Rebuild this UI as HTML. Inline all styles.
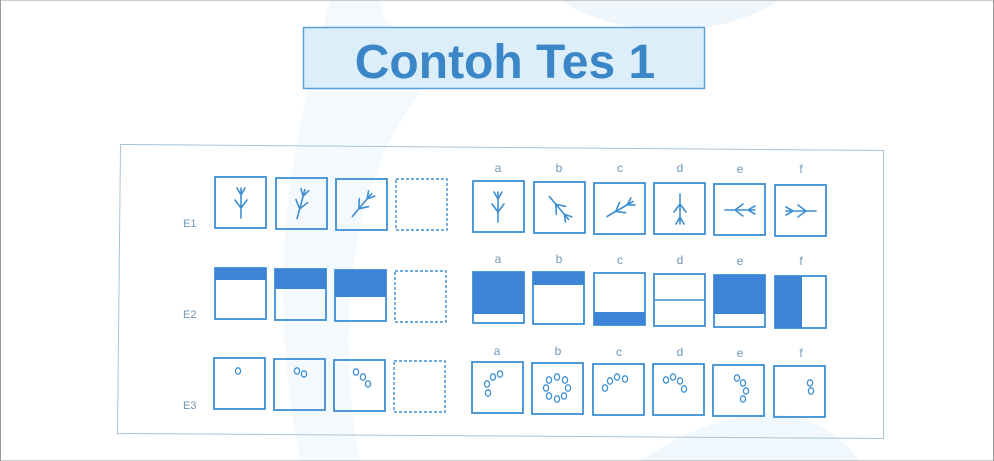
<!DOCTYPE html>
<html><head><meta charset="utf-8"><style>
html,body{margin:0;padding:0;background:#fff;}
body{width:994px;height:461px;overflow:hidden;position:relative;font-family:"Liberation Sans",sans-serif;}
</style></head><body>
<svg width="994" height="461" viewBox="0 0 994 461" style="position:absolute;left:0;top:0">
<defs>
<g id="tree" fill="none" stroke="#3d8fd2" stroke-width="1.6" stroke-linecap="round">
<path d="M0,15 L0,-15 M0,-8 L-4,-15 M0,-8 L4,-15 M0,5 L-6,-3 M0,5 L6,-3"/>
</g>
</defs>
<path d="M560,0 C620,40 720,40 780,0 Z" fill="#eef6fc"/>
<path d="M330,0 C300,120 260,250 300,461 L360,461 C330,300 360,150 440,70 C400,40 380,20 380,0 Z" fill="#f3f9fd"/>
<path d="M860,461 C800,380 700,420 640,461 Z" fill="#f1f8fd"/>
<rect x="0.5" y="0" width="993" height="461" fill="none" stroke="#999" stroke-width="1"/>
<rect x="303.5" y="27.5" width="401" height="61" fill="#dbeefa" stroke="#5aa2d8" stroke-width="1.5"/>
<text x="505" y="78" text-anchor="middle" font-family="Liberation Sans" font-weight="bold" font-size="48" fill="#3a86c6">Contoh Tes 1</text>
<path d="M120.5,144.5 L883.5,150.5 L883.5,438.5 L117.5,433.5 Z" fill="none" stroke="#a9c4d8" stroke-width="1"/>
<g font-family="Liberation Sans" font-size="11" fill="#6f97b8">
<text x="183" y="227">E1</text><text x="183" y="318">E2</text><text x="183" y="409">E3</text>
</g>
<g font-family="Liberation Sans" font-size="12" fill="#6f97b8" text-anchor="middle">
<text x="498" y="172">a</text><text x="559" y="172">b</text><text x="620" y="172">c</text><text x="680" y="172">d</text><text x="740" y="173">e</text><text x="801" y="173">f</text>
<text x="498" y="263">a</text><text x="559" y="263">b</text><text x="620" y="264">c</text><text x="680" y="264">d</text><text x="740" y="265">e</text><text x="801" y="265">f</text>
<text x="497" y="355">a</text><text x="558" y="355">b</text><text x="619" y="356">c</text><text x="680" y="356">d</text><text x="740" y="357">e</text><text x="801" y="357">f</text>
</g>
<g fill="none" stroke="#3d8fd2" stroke-width="1.8">
<rect x="215" y="177" width="51" height="51"/><rect x="276" y="178" width="51" height="51"/><rect x="336" y="179" width="51" height="51"/>
<rect x="396" y="179" width="51" height="51" stroke-dasharray="3,2" stroke-width="1.4"/>
<rect x="473" y="181" width="51" height="51"/><rect x="534" y="182" width="51" height="51"/><rect x="594" y="183" width="51" height="51"/><rect x="654" y="183" width="51" height="51"/><rect x="714" y="184" width="51" height="51"/><rect x="775" y="185" width="51" height="51"/>
<rect x="215" y="268" width="51" height="51"/><rect x="275" y="269" width="51" height="51"/><rect x="335" y="270" width="51" height="51"/>
<rect x="395" y="271" width="51" height="51" stroke-dasharray="3,2" stroke-width="1.4"/>
<rect x="473" y="272" width="51" height="51"/><rect x="533" y="272" width="51" height="52"/><rect x="594" y="273" width="51" height="52"/><rect x="654" y="274" width="51" height="52"/><rect x="714" y="275" width="51" height="52"/><rect x="775" y="276" width="51" height="52"/>
<rect x="214" y="358" width="51" height="51"/><rect x="274" y="359" width="51" height="51"/><rect x="334" y="360" width="51" height="51"/>
<rect x="394" y="361" width="51" height="51" stroke-dasharray="3,2" stroke-width="1.4"/>
<rect x="472" y="362" width="51" height="51"/><rect x="532" y="363" width="51" height="51"/><rect x="593" y="364" width="51" height="51"/><rect x="653" y="364" width="51" height="51"/><rect x="713" y="365" width="51" height="51"/><rect x="774" y="366" width="51" height="51"/>
</g>
<g fill="#3d84d6">
<rect x="215" y="268" width="51" height="12"/><rect x="275" y="269" width="51" height="20"/><rect x="335" y="270" width="51" height="27"/>
<rect x="473" y="272" width="51" height="42"/><rect x="533" y="272" width="51" height="13"/><rect x="594" y="312" width="51" height="13"/>
<rect x="714" y="275" width="51" height="39"/><rect x="775" y="276" width="27" height="52"/>
</g>
<line x1="654" y1="300" x2="705" y2="300" stroke="#3d8fd2" stroke-width="1.6"/>
<use href="#tree" transform="translate(241,203)"/>
<use href="#tree" transform="translate(301,204) rotate(15)"/>
<use href="#tree" transform="translate(362,205) rotate(40)"/>
<use href="#tree" transform="translate(498,207)"/>
<use href="#tree" transform="translate(559,208) rotate(-40) scale(1,-1)"/>
<use href="#tree" transform="translate(620,209) rotate(60)"/>
<use href="#tree" transform="translate(680,209) scale(1,-1)"/>
<use href="#tree" transform="translate(740,210) rotate(-90) scale(1,-1)"/>
<use href="#tree" transform="translate(801,211) rotate(90) scale(1,-1)"/>
<g fill="none" stroke="#3d8fd2" stroke-width="1.3">
<ellipse cx="238" cy="371" rx="2.6" ry="3.2"/>
<ellipse cx="297" cy="371" rx="2.6" ry="3.2"/><ellipse cx="304" cy="374" rx="2.6" ry="3.2"/>
<ellipse cx="356" cy="372" rx="2.6" ry="3.2"/><ellipse cx="363" cy="377" rx="2.6" ry="3.2"/><ellipse cx="368" cy="384" rx="2.6" ry="3.2"/>
<ellipse cx="500" cy="374" rx="2.6" ry="3.2"/><ellipse cx="493" cy="377" rx="2.6" ry="3.2"/><ellipse cx="487" cy="384" rx="2.6" ry="3.2"/><ellipse cx="488" cy="393" rx="2.6" ry="3.2"/>
<ellipse cx="557" cy="377" rx="2.6" ry="3.2"/><ellipse cx="565" cy="380" rx="2.6" ry="3.2"/><ellipse cx="568" cy="388" rx="2.6" ry="3.2"/><ellipse cx="564" cy="396" rx="2.6" ry="3.2"/><ellipse cx="557" cy="399" rx="2.6" ry="3.2"/><ellipse cx="549" cy="396" rx="2.6" ry="3.2"/><ellipse cx="546" cy="388" rx="2.6" ry="3.2"/><ellipse cx="549" cy="380" rx="2.6" ry="3.2"/>
<ellipse cx="605" cy="388" rx="2.6" ry="3.2"/><ellipse cx="610" cy="381" rx="2.6" ry="3.2"/><ellipse cx="617" cy="377" rx="2.6" ry="3.2"/><ellipse cx="625" cy="379" rx="2.6" ry="3.2"/>
<ellipse cx="666" cy="380" rx="2.6" ry="3.2"/><ellipse cx="673" cy="377" rx="2.6" ry="3.2"/><ellipse cx="680" cy="381" rx="2.6" ry="3.2"/><ellipse cx="684" cy="389" rx="2.6" ry="3.2"/>
<ellipse cx="737" cy="378" rx="2.6" ry="3.2"/><ellipse cx="743" cy="383" rx="2.6" ry="3.2"/><ellipse cx="746" cy="391" rx="2.6" ry="3.2"/><ellipse cx="743" cy="399" rx="2.6" ry="3.2"/>
<ellipse cx="810" cy="383" rx="2.6" ry="3.2"/><ellipse cx="811" cy="391" rx="2.6" ry="3.2"/>
</g>
</svg>
</body></html>
